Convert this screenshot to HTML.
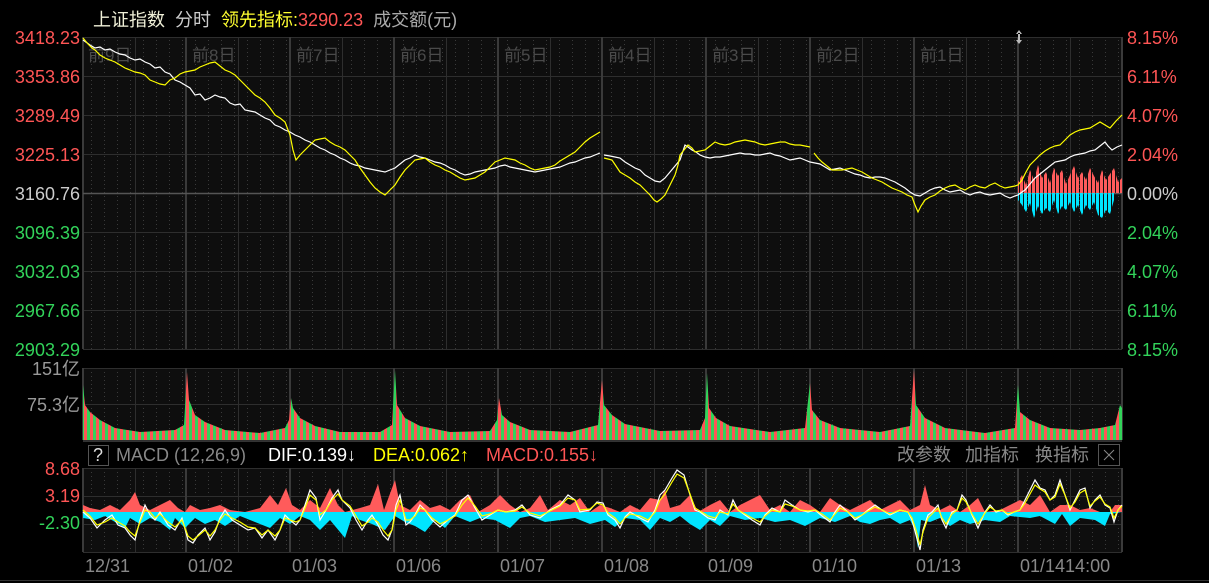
<!DOCTYPE html>
<html><head><meta charset="utf-8"><style>
body{margin:0;background:#000;width:1209px;height:583px;overflow:hidden;font-family:"Liberation Sans","Noto Sans CJK SC",sans-serif;}
.t{position:absolute;font-size:18px;white-space:nowrap;line-height:20px}
.l{position:absolute;right:1129px;font-size:18px;white-space:nowrap;line-height:20px}
</style></head><body>
<svg width="1209" height="583" style="position:absolute;left:0;top:0">
<defs>
<pattern id="vp" width="6" height="10" patternUnits="userSpaceOnUse"><rect width="3" height="10" fill="#ff5555"/><rect x="3" width="3" height="10" fill="#32d35a"/></pattern>
<pattern id="rp" width="4" height="10" patternUnits="userSpaceOnUse"><rect width="3" height="10" fill="#ff5b5b"/></pattern>
<pattern id="cp" width="4" height="10" patternUnits="userSpaceOnUse"><rect width="3" height="10" fill="#00e5ff"/></pattern>
<pattern id="dv" width="13" height="4" patternUnits="userSpaceOnUse"><rect x="0" y="0" width="1" height="1" fill="#3a3a3a"/></pattern>
</defs>
<rect x="83" y="37" width="1039" height="312" fill="#0e0e0e"/>
<rect x="83" y="368" width="1039" height="72" fill="#0e0e0e"/>
<rect x="83" y="468" width="1039" height="84" fill="#0e0e0e"/>
<rect x="83" y="37" width="1039" height="312" fill="url(#dv)"/>
<rect x="83" y="368" width="1039" height="72" fill="url(#dv)"/>
<rect x="83" y="468" width="1039" height="84" fill="url(#dv)"/>
<g stroke="#2e2e2e" stroke-width="1">
<path d="M83 37.5H1122M83 76.5H1122M83 115.5H1122M83 154.5H1122M83 232.5H1122M83 271.5H1122M83 310.5H1122M83 349.5H1122M83 368.5H1122M83 404.5H1122M83 440.5H1122M83 468.5H1122M83 496.5H1122M83 524.5H1122M83 552.5H1122"/>
<path d="M135.5 37V349M238.5 37V349M342.5 37V349M446.5 37V349M550.5 37V349M654.5 37V349M758.5 37V349M862.5 37V349M966.5 37V349M1070.5 37V349"/>
<path d="M135.5 368V440M238.5 368V440M342.5 368V440M446.5 368V440M550.5 368V440M654.5 368V440M758.5 368V440M862.5 368V440M966.5 368V440M1070.5 368V440"/>
<path d="M135.5 468V552M238.5 468V552M342.5 468V552M446.5 468V552M550.5 468V552M654.5 468V552M758.5 468V552M862.5 468V552M966.5 468V552M1070.5 468V552"/>
</g>
<g stroke="#3a3a3a" stroke-width="2">
<path d="M83 37V349M186 37V349M290 37V349M394 37V349M498 37V349M602 37V349M706 37V349M810 37V349M914 37V349M1018 37V349M1122 37V349"/>
<path d="M83 368V440M186 368V440M290 368V440M394 368V440M498 368V440M602 368V440M706 368V440M810 368V440M914 368V440M1018 368V440M1122 368V440"/>
<path d="M83 468V552M186 468V552M290 468V552M394 468V552M498 468V552M602 468V552M706 468V552M810 468V552M914 468V552M1018 468V552M1122 468V552"/>
</g>
<path d="M83 193.5H1122" stroke="#555" stroke-width="1.5"/>
<g fill="#4a4a4a" font-size="17" font-family="Liberation Sans,Noto Sans CJK SC,sans-serif">
<text x="88" y="61">前9日</text><text x="192" y="61">前8日</text><text x="296" y="61">前7日</text><text x="400" y="61">前6日</text><text x="504" y="61">前5日</text><text x="608" y="61">前4日</text><text x="712" y="61">前3日</text><text x="816" y="61">前2日</text><text x="920" y="61">前1日</text>
</g>
<path fill="url(#rp)" d="M1018 193V182L1022 175L1026 185L1030 170L1034 180L1038 165L1042 178L1046 172L1050 183L1054 168L1058 176L1062 170L1066 184L1070 175L1074 166L1078 178L1082 172L1086 180L1090 168L1094 176L1098 183L1102 170L1106 180L1110 174L1114 168L1118 182L1122 178V193Z"/>
<path fill="url(#cp)" d="M1018 193V200L1022 205L1026 212L1030 203L1034 218L1038 206L1042 214L1046 208L1050 212L1054 200L1058 214L1062 206L1066 210L1070 202L1074 212L1078 205L1082 215L1086 205L1090 210L1094 202L1098 215L1102 218L1106 210L1110 214L1114 200V193Z"/>
<polyline fill="none" stroke="#fff" stroke-width="1.2" points="83,40 90,45 95,48 100,47 105,50 110,49 115,52 120,54 125,55 130,58 135,60 140,59 145,62 150,64 155,68 160,67 165,72 170,74 175,80 180,82 185,85 190,88 195,95 200,94 205,100 210,98 215,95 220,97 225,98 230,103 235,105 240,104 245,110 250,111 255,112 260,115 265,118 270,120 275,125 280,127 285,130 290,132 295,135 300,137 305,140 310,142 315,145 320,148 325,150 330,153 335,155 340,158 345,160 350,163 355,165 360,166 365,168 370,169 375,170 380,171 385,172 390,170 395,168 400,164 405,160 410,158 415,155 420,157 425,158 430,160 435,162 440,163 445,165 450,168 455,170 460,173 465,175 470,174 475,172 480,171 485,170 490,169 495,168 500,166 505,165 510,167 515,168 520,169 525,170 530,171 535,172 540,171 545,170 550,169 555,168 560,167 565,165 570,163 575,162 580,160 585,158 590,157 595,155 600,153"/>
<polyline fill="none" stroke="#fff" stroke-width="1.2" points="604,155 610,156 615,157 620,158 625,162 630,165 635,168 640,170 645,175 650,178 655,181 660,182 665,178 670,172 675,166 680,160 685,145 688,147 692,150 696,152 700,155 705,157 710,158 715,157 720,157 725,156 730,155 735,154 740,153 745,154 750,154 755,155 760,155 765,154 770,153 775,155 780,156 785,158 790,160 795,159 800,158 805,160 810,162 815,163 820,164 825,167 830,170 835,169 840,168 845,170 850,172 855,174 860,175 865,177 870,178 875,177 880,177 885,178 890,180 895,182 900,185 905,188 910,192 915,195 920,196 925,193 930,190 935,188 940,187 945,190 950,192 955,191 960,190 965,193 970,195 975,193 980,192 985,194 990,195 995,194 1000,193 1005,196 1010,198 1015,196 1018,195 1022,192 1025,190 1030,184 1035,178 1040,174 1045,170 1050,166 1055,162 1060,161 1065,160 1070,157 1075,155 1080,154 1085,153 1090,151 1095,150 1100,146 1105,142 1108,146 1112,150 1117,147 1122,145"/>
<polyline fill="none" stroke="#ffff00" stroke-width="1.2" points="83,38 88,44 92,48 95,50 100,55 105,58 110,60 115,62 120,65 125,68 130,70 135,72 140,73 145,75 150,80 155,82 160,84 165,85 170,80 175,78 180,74 185,72 190,71 195,70 200,67 205,65 210,63 215,62 220,66 225,70 230,72 235,75 240,80 245,85 250,90 255,95 260,98 265,102 270,108 275,115 280,118 285,122 290,135 293,150 296,160 300,155 305,150 310,145 315,140 320,139 325,138 330,142 335,145 340,147 345,150 350,155 355,160 360,168 365,175 370,182 375,188 380,192 385,195 390,190 395,185 400,177 405,170 410,165 415,160 420,159 425,158 430,162 435,165 440,167 445,170 450,172 455,175 460,178 465,180 470,179 475,178 480,175 485,172 490,167 495,162 500,160 505,158 510,159 515,160 520,163 525,165 530,168 535,170 540,169 545,168 550,167 555,165 560,161 565,158 570,155 575,152 580,147 585,142 590,138 595,135 600,132"/>
<polyline fill="none" stroke="#ffff00" stroke-width="1.2" points="604,158 608,159 612,160 616,166 620,172 625,175 630,178 635,182 640,185 645,190 650,195 654,200 657,202 661,199 665,195 670,185 675,175 678,165 680,155 684,150 688,145 692,148 695,152 700,151 705,150 710,146 715,142 720,144 725,145 730,144 735,142 740,141 745,140 750,141 755,142 760,144 765,145 770,144 775,143 780,142 785,142 790,144 795,145 800,145 805,146 810,147"/>
<polyline fill="none" stroke="#ffff00" stroke-width="1.2" points="814,153 818,158 822,162 827,166 832,170 837,170 842,170 847,169 852,168 857,170 862,172 867,175 872,178 877,180 882,182 887,185 892,188 897,190 902,192 907,195 912,197 915,205 918,212 921,206 925,200 930,197 935,195 940,191 945,188 950,186 955,185 960,188 965,190 970,187 975,185 980,187 985,188 990,185 995,183 1000,186 1005,188 1010,187 1015,186 1018,185 1022,180 1026,172 1030,165 1035,160 1040,155 1045,151 1050,148 1055,146 1060,145 1065,140 1070,135 1075,132 1080,130 1085,129 1090,128 1095,125 1100,122 1105,125 1110,128 1116,121 1122,115"/>
<path fill="url(#vp)" d="M83 440V385L85 405L90 412L100 420L115 428L140 432L175 430L184 425L187 372L189 400L195 415L205 422L225 430L260 433L285 428L289 420L291 398L293 408L300 418L315 426L340 432L380 432L392 425L395 370L397 405L405 418L420 426L450 432L490 431L497 420L499 398L502 415L510 422L530 430L570 432L598 425L602 380L604 405L612 415L625 424L660 431L700 430L705 418L707 373L709 408L716 418L730 426L770 432L805 428L810 383L812 410L820 420L840 428L880 432L910 426L914 370L916 405L925 418L945 428L985 433L1015 428L1018 385L1020 412L1030 420L1050 428L1080 430L1100 428L1115 425L1120 405L1122 408V440Z"/>
<path fill="#ff5b5b" d="M83 512V505L90 508L100 510L110 505L120 510L130 500L135 492L140 505L150 510L160 505L170 500L178 508L185 512L190 505L200 510L210 508L220 505L230 510L245 512L260 508L270 495L278 505L286 488L292 505L300 510L310 500L320 508L330 488L338 505L345 512L360 508L370 505L378 484L384 510L395 480L400 505L410 510L420 500L430 508L440 505L450 510L460 500L470 495L478 512L490 505L500 495L510 505L520 512L530 508L540 495L548 510L560 500L570 505L580 498L590 512L600 505L610 508L620 512L630 505L640 510L650 498L660 500L665 490L670 508L680 505L690 495L698 512L710 505L720 500L730 512L740 505L750 500L760 495L770 510L780 505L790 512L800 500L810 505L820 512L830 498L840 505L850 510L860 505L870 500L880 510L890 505L900 500L910 510L920 505L925 485L930 505L940 510L950 505L960 512L970 505L978 498L985 512L1000 510L1010 505L1020 500L1030 505L1040 495L1050 512L1060 505L1070 505L1080 510L1090 508L1100 512L1110 512L1115 505L1122 505V512Z"/>
<path fill="#00e5ff" d="M83 512V518L95 520L105 516L115 522L125 528L130 518L140 524L150 518L160 522L170 530L175 518L185 528L195 518L205 524L215 520L225 526L240 516L255 522L270 528L280 518L290 524L300 516L310 520L320 530L330 520L345 538L352 516L360 520L372 524L385 530L395 516L405 522L415 526L425 532L435 520L445 528L455 516L470 522L480 518L495 520L510 528L520 518L530 516L545 522L560 520L575 518L590 524L605 520L615 527L625 518L640 520L650 530L660 518L670 522L680 516L690 524L700 530L710 520L720 526L730 516L745 520L760 518L775 522L790 520L805 526L820 518L835 522L850 516L860 522L870 524L880 520L890 518L900 524L910 520L915 530L918 548L921 520L930 522L940 518L950 526L960 520L970 524L985 520L1000 522L1010 516L1030 518L1040 516L1055 524L1062 514L1070 526L1080 518L1095 520L1105 526L1110 514L1122 512V512Z"/>
<polyline fill="none" stroke="#fff" stroke-width="1.2" points="83,512 90,518 97,528 105,520 112,515 118,525 125,528 130,535 135,540 140,520 145,505 150,515 155,520 160,512 168,525 175,530 182,518 188,540 193,543 198,535 205,528 210,540 215,532 220,518 225,510 232,520 240,525 248,530 255,528 262,538 268,530 275,540 280,530 285,515 290,520 296,525 300,520 305,505 310,490 316,498 320,520 326,510 332,498 338,490 342,500 350,508 356,520 362,530 368,520 372,515 378,525 383,535 388,540 392,530 396,505 400,495 406,525 410,522 415,515 420,505 425,510 432,520 440,527 448,520 455,515 462,500 468,495 475,508 482,520 490,515 498,510 506,512 515,510 522,505 530,515 540,518 550,510 560,505 568,495 575,500 580,512 590,510 597,502 603,503 608,515 615,520 620,528 625,517 630,512 640,518 648,522 655,510 660,495 665,490 672,478 677,470 684,475 690,495 695,510 700,512 708,518 715,520 720,510 728,515 733,500 738,510 745,515 752,520 760,525 765,515 772,508 780,512 785,500 792,505 800,510 808,512 815,510 822,516 830,522 835,512 840,505 848,512 855,520 862,515 868,510 875,505 882,510 890,515 900,510 908,512 912,520 916,535 920,550 923,530 928,515 932,512 938,505 942,520 946,528 952,512 957,510 962,495 966,500 972,515 978,528 985,512 990,505 996,512 1002,510 1008,515 1014,512 1020,510 1025,500 1030,490 1035,480 1040,488 1045,490 1050,500 1055,495 1060,480 1065,495 1070,510 1075,500 1080,490 1085,488 1090,508 1095,500 1100,495 1105,505 1110,508 1114,522 1118,510 1122,505"/>
<polyline fill="none" stroke="#ffff00" stroke-width="1.2" points="83,510 90,516 97,525 105,522 112,518 118,522 125,526 130,532 135,536 140,522 145,510 150,512 155,518 160,514 168,522 175,527 182,520 188,536 193,540 198,536 205,530 210,536 215,530 220,520 225,514 232,518 240,522 248,527 255,528 262,535 268,530 275,536 280,530 285,518 290,520 296,522 300,520 305,508 310,495 316,500 320,515 326,510 332,500 338,494 342,500 350,506 356,516 362,526 368,522 372,518 378,522 383,530 388,536 392,530 396,510 400,500 406,520 410,520 415,516 420,508 425,510 432,518 440,524 448,520 455,516 462,505 468,498 475,506 482,516 490,514 498,510 506,512 515,511 522,507 530,513 540,516 550,511 560,506 568,498 575,500 580,510 590,509 597,503 603,505 608,513 615,518 620,524 625,518 630,514 640,516 648,520 655,512 660,500 665,494 672,482 677,474 684,478 690,494 695,508 700,511 708,516 715,518 720,512 728,514 733,504 738,510 745,514 752,518 760,522 765,516 772,510 780,512 785,504 792,506 800,510 808,511 815,510 822,514 830,520 835,514 840,508 848,512 855,518 862,515 868,511 875,507 882,510 890,514 900,510 908,512 912,518 916,530 920,545 923,532 928,518 932,514 938,508 942,518 946,524 952,514 957,510 962,498 966,502 972,514 978,524 985,513 990,507 996,511 1002,510 1008,514 1014,512 1020,510 1025,503 1030,494 1035,485 1040,489 1045,492 1050,500 1055,497 1060,484 1065,495 1070,508 1075,502 1080,493 1085,490 1090,506 1095,501 1100,497 1105,504 1110,507 1114,518 1118,510 1122,506"/>
<path d="M83 441.5H1122M0 580.5H1209" stroke="#333" stroke-width="1"/>
<rect x="88.5" y="445.5" width="20" height="20" fill="none" stroke="#555"/>
<rect x="1098.5" y="444.5" width="21" height="21" fill="none" stroke="#555"/>
<path d="M1104 450L1114 460M1114 450L1104 460" stroke="#888" stroke-width="1"/>
<path d="M1019 30l-3 4h6zM1019 44l-3 -4h6z M1018 33h2v8h-2z" fill="#bbb"/>
</svg>
<div class="t" style="left:93px;top:10px;font-size:18px"><span style="color:#f0f0d8">上证指数</span>&nbsp; <span style="color:#ccc">分时</span>&nbsp; <span style="color:#ffff30">领先指标:</span><span style="color:#ff5555">3290.23</span>&nbsp; <span style="color:#aaa">成交额(元)</span></div>
<div class="l" style="top:28px;color:#ff5555">3418.23</div>
<div class="l" style="top:67px;color:#ff5555">3353.86</div>
<div class="l" style="top:106px;color:#ff5555">3289.49</div>
<div class="l" style="top:145px;color:#ff5555">3225.13</div>
<div class="l" style="top:184px;color:#ccc">3160.76</div>
<div class="l" style="top:223px;color:#32d35a">3096.39</div>
<div class="l" style="top:262px;color:#32d35a">3032.03</div>
<div class="l" style="top:301px;color:#32d35a">2967.66</div>
<div class="l" style="top:340px;color:#32d35a">2903.29</div>
<div class="t" style="left:1127px;top:28px;color:#ff5555">8.15%</div>
<div class="t" style="left:1127px;top:67px;color:#ff5555">6.11%</div>
<div class="t" style="left:1127px;top:106px;color:#ff5555">4.07%</div>
<div class="t" style="left:1127px;top:145px;color:#ff5555">2.04%</div>
<div class="t" style="left:1127px;top:184px;color:#ccc">0.00%</div>
<div class="t" style="left:1127px;top:223px;color:#32d35a">2.04%</div>
<div class="t" style="left:1127px;top:262px;color:#32d35a">4.07%</div>
<div class="t" style="left:1127px;top:301px;color:#32d35a">6.11%</div>
<div class="t" style="left:1127px;top:340px;color:#32d35a">8.15%</div>
<div class="l" style="top:359px;color:#999">151亿</div>
<div class="l" style="top:395px;color:#999">75.3亿</div>
<div class="t" style="left:93px;top:445px;color:#ddd">?</div>
<div class="t" style="left:116px;top:445px;color:#888">MACD (12,26,9)</div>
<div class="t" style="left:268px;top:445px;color:#fff">DIF:0.139↓</div>
<div class="t" style="left:373px;top:445px;color:#ffff00">DEA:0.062↑</div>
<div class="t" style="left:486px;top:445px;color:#ff5555">MACD:0.155↓</div>
<div class="t" style="left:897px;top:445px;color:#888">改参数</div>
<div class="t" style="left:965px;top:445px;color:#888">加指标</div>
<div class="t" style="left:1035px;top:445px;color:#888">换指标</div>
<div class="l" style="top:459px;color:#ff5555">8.68</div>
<div class="l" style="top:486px;color:#ff5555">3.19</div>
<div class="l" style="top:513px;color:#32d35a">-2.30</div>
<div class="t" style="left:85px;top:556px;color:#888">12/31</div>
<div class="t" style="left:188px;top:556px;color:#888">01/02</div>
<div class="t" style="left:292px;top:556px;color:#888">01/03</div>
<div class="t" style="left:396px;top:556px;color:#888">01/06</div>
<div class="t" style="left:500px;top:556px;color:#888">01/07</div>
<div class="t" style="left:604px;top:556px;color:#888">01/08</div>
<div class="t" style="left:708px;top:556px;color:#888">01/09</div>
<div class="t" style="left:812px;top:556px;color:#888">01/10</div>
<div class="t" style="left:916px;top:556px;color:#888">01/13</div>
<div class="t" style="left:1020px;top:556px;color:#888">01/1414:00</div>
</body></html>
